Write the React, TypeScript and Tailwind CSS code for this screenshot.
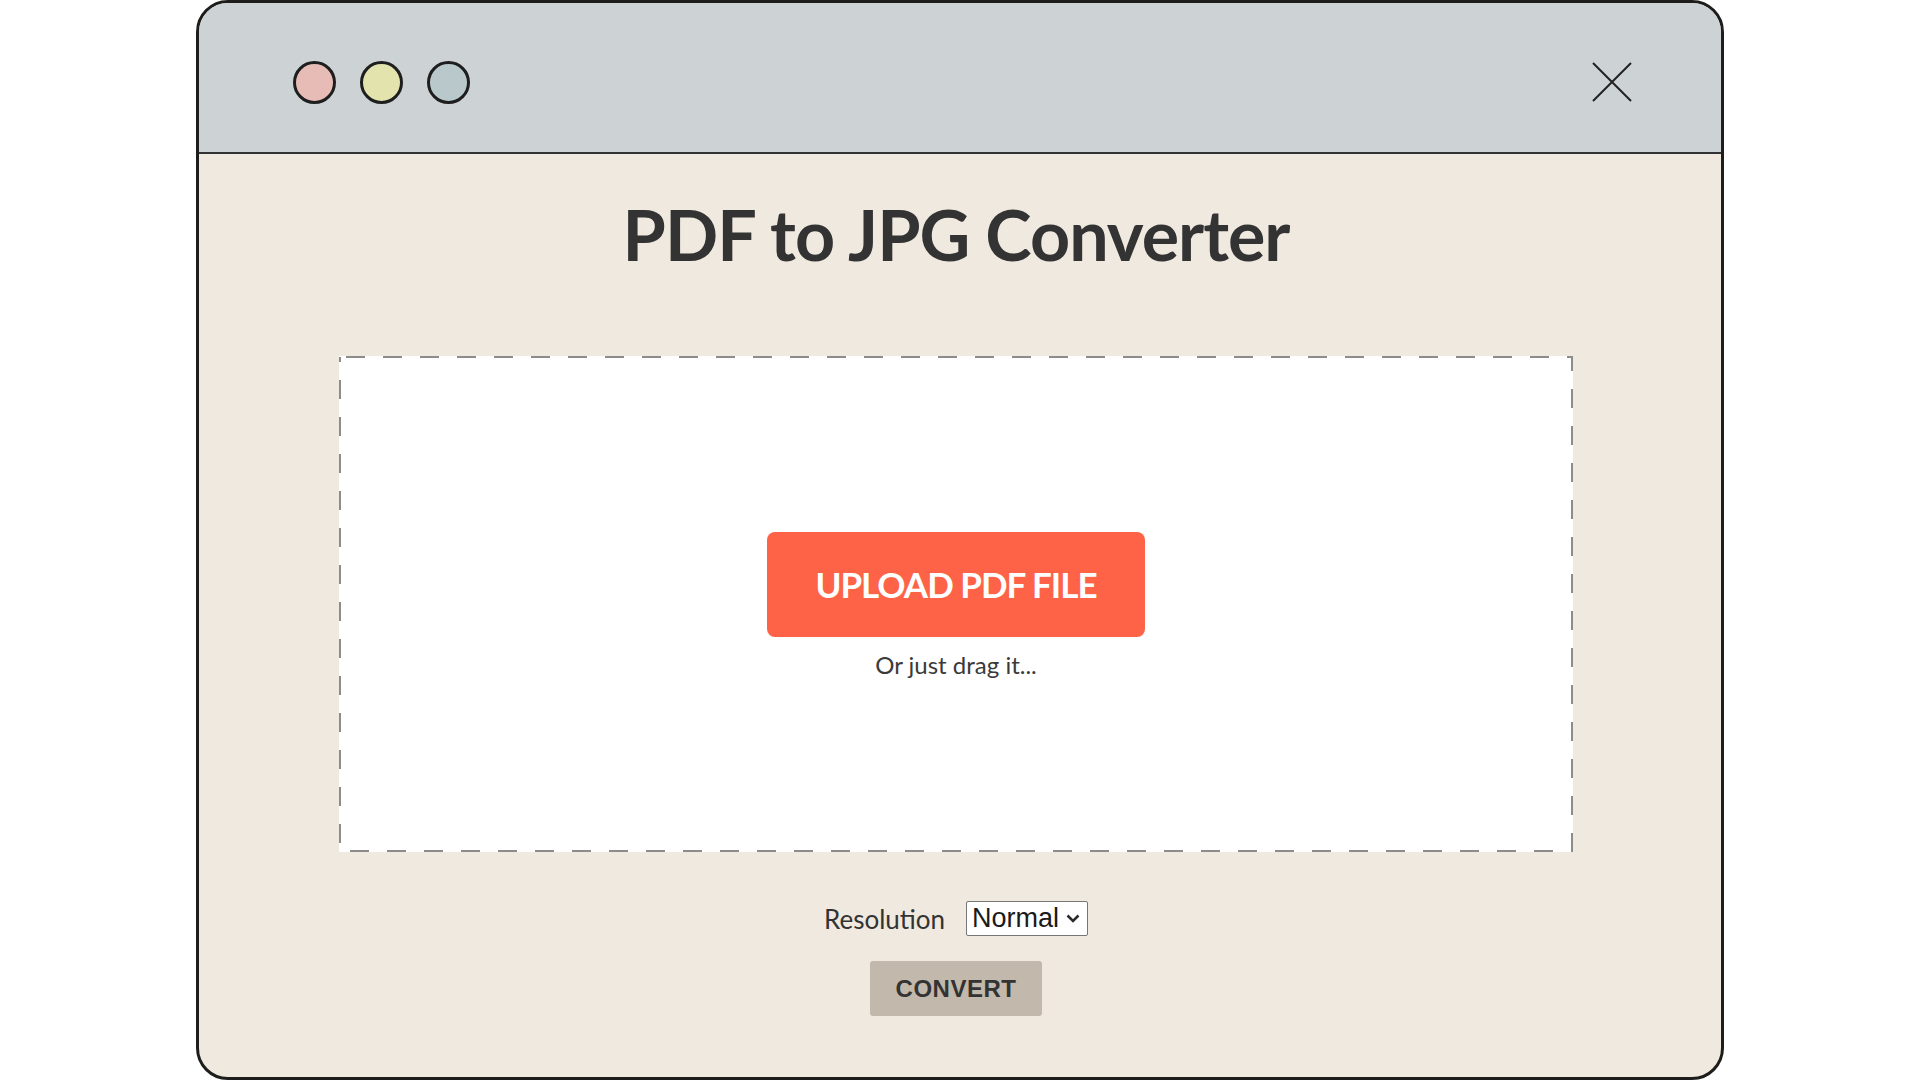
import React from 'react';

const lato = { fontFamily: 'Lato, "Open Sans", sans-serif' };
const arial = { fontFamily: '"Liberation Sans", Arial, sans-serif' };

const DashedFrame: React.FC = () => (
  <svg className="absolute inset-0 w-full h-full pointer-events-none" preserveAspectRatio="none">
    <rect
      x="1"
      y="1"
      width="calc(100% - 2px)"
      height="calc(100% - 2px)"
      fill="none"
      stroke="#8c8c8c"
      strokeWidth="2"
      strokeDasharray="19 18"
      strokeDashoffset="-6"
    />
  </svg>
);

const App: React.FC = () => {
  return (
    <div className="min-h-screen bg-white">
      <div className="mx-auto w-[1528px] h-[1080px] border-[3px] border-[#1d1d1b] rounded-[32px] overflow-hidden bg-[#f0e9e0] flex flex-col">
        {/* title bar */}
        <div className="h-[151px] shrink-0 bg-[#cdd2d4] border-b-2 border-[#333333] flex items-center justify-between pl-[94px] pr-[89px] pt-[9px]">
          <div className="flex items-center gap-[24px]">
            <span className="w-[43px] h-[43px] rounded-full border-[3px] border-[#1e1e1e] bg-[#e7bcb6]" />
            <span className="w-[43px] h-[43px] rounded-full border-[3px] border-[#1e1e1e] bg-[#e3e3ad]" />
            <span className="w-[43px] h-[43px] rounded-full border-[3px] border-[#1e1e1e] bg-[#b9c9cb]" />
          </div>
          <button className="w-[40px] h-[40px]" aria-label="Close">
            <svg width="40" height="40" viewBox="0 0 40 40" fill="none">
              <path d="M1 1 L39 39 M39 1 L1 39" stroke="#222" strokeWidth="2" />
            </svg>
          </button>
        </div>

        <div className="ml-[140px] w-[1234px] flex flex-col items-center">
          <h1
            className="mt-[45px] text-center text-[70px] font-bold leading-none tracking-[-1px] text-[#333333]"
            style={lato}
          >
            PDF to JPG Converter
          </h1>

          <div className="relative mt-[87px] w-full h-[496px] bg-white flex flex-col items-center justify-center">
            <DashedFrame />
            <button
              className="w-[378px] h-[105px] rounded-[8px] bg-[#ff6347] text-white text-[35px] font-bold leading-none tracking-[-1px]"
              style={lato}
            >
              UPLOAD PDF FILE
            </button>
            <p className="mt-[16px] text-[24px] leading-none text-[#3a3a3a]" style={lato}>
              Or just drag it...
            </p>
          </div>

          <div className="mt-[49px] flex items-center gap-[21px]">
            <span className="text-[26px] leading-none text-[#333333]" style={lato}>
              Resolution
            </span>
            <div className="relative w-[122px] h-[35px]">
              <select
                className="w-full h-full appearance-none bg-white border border-[#767676] rounded-[2px] pl-[5px] text-[27px] leading-none text-[#1a1a1a]"
                style={arial}
                defaultValue="normal"
              >
                <option value="normal">Normal</option>
                <option value="high">High</option>
                <option value="low">Low</option>
              </select>
              <svg
                className="absolute right-[8px] top-[13px] pointer-events-none"
                width="14"
                height="9"
                viewBox="0 0 14 9"
                fill="none"
              >
                <path d="M1.5 1.5 L7 7 L12.5 1.5" stroke="#2a2a2a" strokeWidth="2.5" />
              </svg>
            </div>
          </div>

          <button
            className="mt-[25px] w-[172px] h-[55px] rounded-[3px] bg-[#c2b8ab] text-[24px] font-bold tracking-[0.5px] text-[#333333]"
            style={arial}
          >
            CONVERT
          </button>
        </div>
      </div>
    </div>
  );
};

export default App;
